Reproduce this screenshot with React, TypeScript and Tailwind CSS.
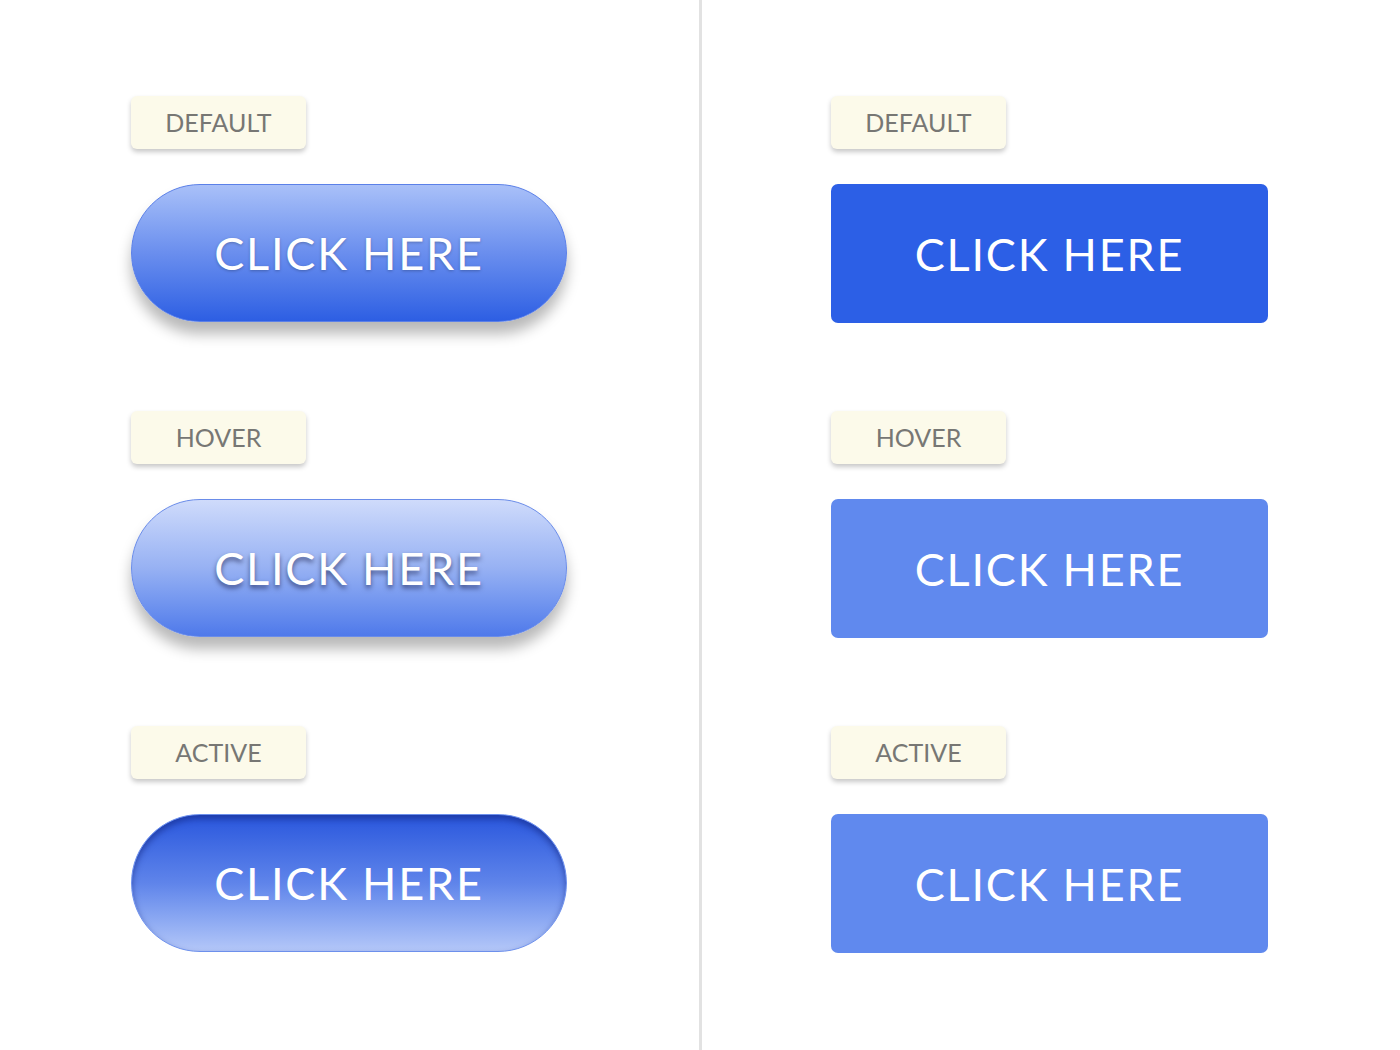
import React from "react";

const font = { fontFamily: "Lato, 'Noto Sans', sans-serif" };

function Label({ text }: { text: string }) {
  return (
    <div
      className="w-[175px] h-[53px] rounded-[6px] bg-[#fcfaea] flex items-center justify-center text-[25px] text-[#777774] shadow-[0_3px_5px_rgba(0,0,0,0.22)]"
      style={font}
    >
      {text}
    </div>
  );
}

const txt = "text-white text-[45px] tracking-[0.04em] pt-[2px]";

function PillDefault() {
  return (
    <div
      className={`w-[436px] h-[138px] rounded-full border border-[#5b80e8] bg-gradient-to-b from-[#a9c0f8] via-[#6a8eee] to-[#2d5ee3] shadow-[0_12px_14px_rgba(0,0,0,0.28)] flex items-center justify-center ${txt} [text-shadow:0_1px_3px_rgba(0,0,0,0.25)]`}
      style={font}
    >
      CLICK HERE
    </div>
  );
}

function PillHover() {
  return (
    <div
      className={`w-[436px] h-[138px] rounded-full border border-[#6a8ce9] bg-gradient-to-b from-[#cfdbfb] via-[#97b1f3] to-[#4f79ea] shadow-[0_12px_14px_rgba(0,0,0,0.28)] flex items-center justify-center ${txt} [text-shadow:0_3px_5px_rgba(0,0,40,0.55)]`}
      style={font}
    >
      CLICK HERE
    </div>
  );
}

function PillActive() {
  return (
    <div
      className={`w-[436px] h-[138px] rounded-full border border-[#6d90ec] bg-gradient-to-b from-[#2a56dd] via-[#5f84ea] to-[#b4c7f8] shadow-[inset_0_4px_6px_rgba(20,40,130,0.6)] flex items-center justify-center ${txt}`}
      style={font}
    >
      CLICK HERE
    </div>
  );
}

function Rect({ color }: { color: string }) {
  return (
    <div
      className={`w-[437px] h-[139px] rounded-[7px] ${color} flex items-center justify-center ${txt}`}
      style={font}
    >
      CLICK HERE
    </div>
  );
}

function Column({ children }: { children: React.ReactNode }) {
  return <div className="flex flex-col pt-[96px]">{children}</div>;
}

export default function App() {
  return (
    <div className="w-[1400px] h-[1050px] bg-white grid grid-cols-[699px_3px_698px] overflow-hidden">
      <div className="pl-[131px]">
        <Column>
          <Label text="DEFAULT" />
          <div className="mt-[35px]"><PillDefault /></div>
          <div className="mt-[89px]"><Label text="HOVER" /></div>
          <div className="mt-[35px]"><PillHover /></div>
          <div className="mt-[89px]"><Label text="ACTIVE" /></div>
          <div className="mt-[35px]"><PillActive /></div>
        </Column>
      </div>
      <div className="bg-[#e2e2e2] h-[1050px]" />
      <div className="pl-[129px]">
        <Column>
          <Label text="DEFAULT" />
          <div className="mt-[35px]"><Rect color="bg-[#2c5fe6]" /></div>
          <div className="mt-[88px]"><Label text="HOVER" /></div>
          <div className="mt-[35px]"><Rect color="bg-[#6089ee]" /></div>
          <div className="mt-[88px]"><Label text="ACTIVE" /></div>
          <div className="mt-[35px]"><Rect color="bg-[#6089ee]" /></div>
        </Column>
      </div>
    </div>
  );
}
